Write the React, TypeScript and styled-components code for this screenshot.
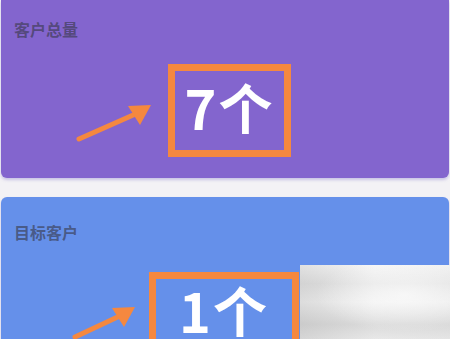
import styled, { createGlobalStyle } from "styled-components";

const Global = createGlobalStyle`
  html, body {
    margin: 0;
    padding: 0;
    background: #f3f2f5;
    font-family: "Noto Sans CJK SC", "Noto Sans", sans-serif;
  }
  #root {
    width: 450px;
    height: 339px;
    overflow: hidden;
  }
`;

const Page = styled.div`
  position: relative;
  width: 450px;
  height: 339px;
  overflow: hidden;
  display: flex;
  flex-direction: column;
  gap: 19px;
`;

const Card = styled.div<{ $bg: string; $height: number; $pad: number; $top?: boolean }>`
  background: ${(p) => p.$bg};
  height: ${(p) => p.$height}px;
  flex-shrink: 0;
  margin: 0 1px;
  border-radius: ${(p) => (p.$top ? "6px 6px 0 0" : "0 0 6px 6px")};
  box-shadow: 0 2px 3px rgba(120, 110, 200, 0.35);
  padding: ${(p) => p.$pad}px 13px 0;
  box-sizing: border-box;
`;

const Title = styled.div`
  font-size: 16px;
  line-height: 22px;
  font-weight: 700;
  color: rgba(55, 55, 70, 0.62);
`;

const Row = styled.div<{ $left: number; $top: number; $gap: number }>`
  display: flex;
  align-items: flex-start;
  padding-left: ${(p) => p.$left}px;
  margin-top: ${(p) => p.$top}px;
  gap: ${(p) => p.$gap}px;
`;

const Arrow = styled.svg<{ $offset: number }>`
  flex-shrink: 0;
  margin-top: ${(p) => p.$offset}px;
`;

const Box = styled.div<{ $width: number; $pad: number }>`
  width: ${(p) => p.$width}px;
  height: 93px;
  box-sizing: border-box;
  border: 7px solid #f5883f;
  padding-top: ${(p) => p.$pad}px;
  display: flex;
  align-items: flex-start;
  justify-content: center;
  flex-shrink: 0;
`;

const Count = styled.span`
  color: #ffffff;
  font-size: 54px;
  font-weight: 700;
  line-height: 54px;
  letter-spacing: 2px;
`;

const Blur = styled.div`
  position: absolute;
  left: 300px;
  top: 265px;
  width: 150px;
  height: 74px;
  background: linear-gradient(180deg, #f4f4f4 0%, #dedede 25%, #ededed 50%, #d2d2d2 80%, #e2e2e2 100%);
  &::after {
    content: "";
    position: absolute;
    inset: 0;
    background: radial-gradient(ellipse at 70% 40%, rgba(255,255,255,0.6), rgba(255,255,255,0) 60%),
      linear-gradient(90deg, rgba(190,190,190,0.35) 0%, rgba(255,255,255,0.2) 50%, rgba(235,235,235,0.3) 100%);
  }
`;

function ArrowIcon({ w, h, offset }: { w: number; h: number; offset: number }) {
  return (
    <Arrow $offset={offset} width={w} height={h} viewBox={`0 0 ${w} ${h}`}>
      <line x1={3} y1={h - 4} x2={w - 12} y2={9} stroke="#f5883f" strokeWidth={5} strokeLinecap="round" />
      <polygon points={`${w - 1},2 ${w - 24},3 ${w - 12},22`} fill="#f5883f" />
    </Arrow>
  );
}

export default function App() {
  return (
    <>
      <Global />
      <Page>
        <Card $bg="#8365ce" $height={178} $pad={18}>
          <Title>客户总量</Title>
          <Row $left={62} $top={24} $gap={16}>
            <ArrowIcon w={76} h={40} offset={39} />
            <Box $width={123} $pad={9}>
              <Count>7个</Count>
            </Box>
          </Row>
        </Card>
        <Card $bg="#6590ea" $height={160} $pad={24} $top>
          <Title>目标客户</Title>
          <Row $left={58} $top={29} $gap={13}>
            <ArrowIcon w={64} h={36} offset={33} />
            <Box $width={150} $pad={4}>
              <Count>1个</Count>
            </Box>
          </Row>
        </Card>
        <Blur />
      </Page>
    </>
  );
}
